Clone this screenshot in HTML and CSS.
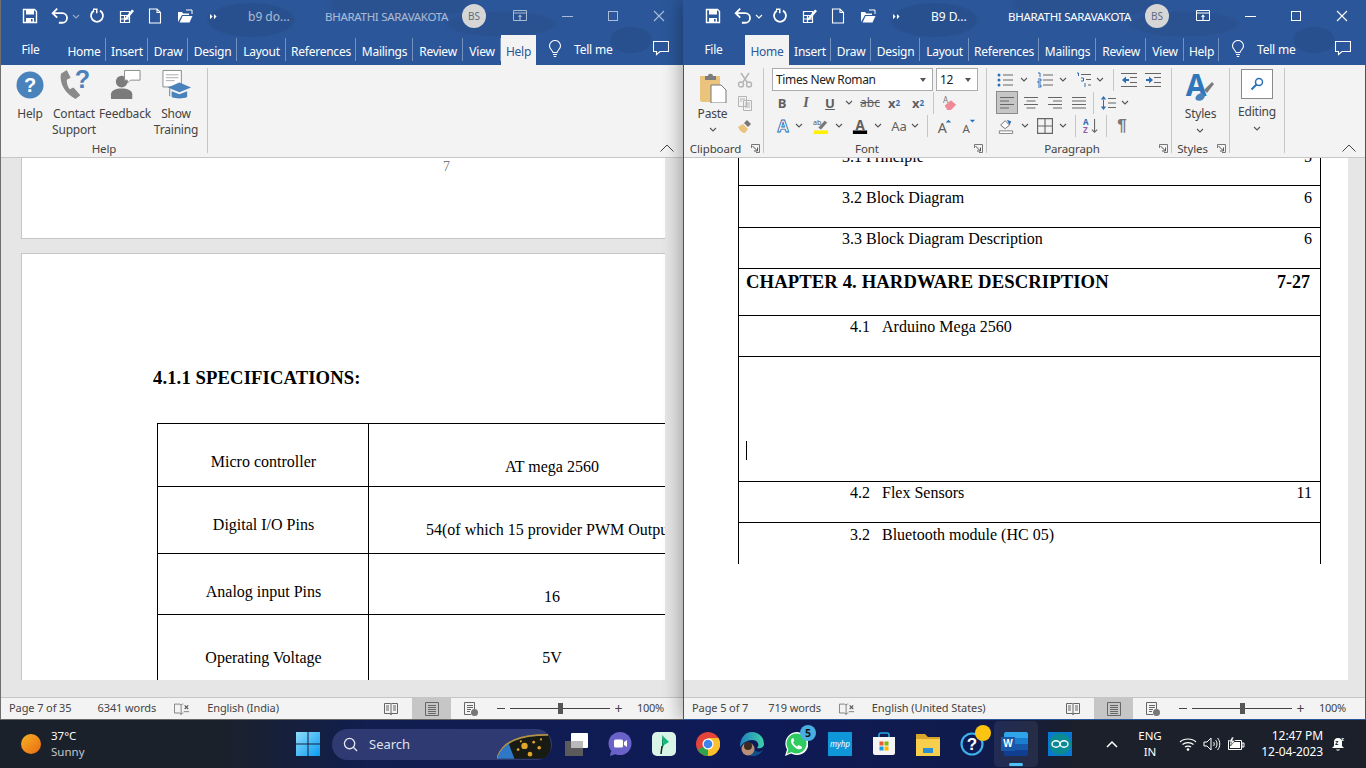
FILE: index.html
```html
<!DOCTYPE html>
<html lang="en">
<head>
  <meta charset="UTF-8">
  <title>Word windows</title>
  <link rel="stylesheet" href="styles.css">
</head>
<body>
  <svg class="sprite" aria-hidden="true">
    <symbol id="i-save" viewBox="0 0 16 16"><path d="M1.500 1.500h11l2 2v11h-13z" fill="none" stroke="currentColor" stroke-width="1.400"/><path d="M4 2h8v4.500H4zM4 10h8v4.500H4z" fill="currentColor"/><path d="M9 11h1.600v2.600H9z" fill="#2b579a"/></symbol>
    <symbol id="i-undo" viewBox="0 0 16 16"><path d="M5.500 1.500 1.500 5.500l4 4M1.500 5.500H10a4.200 4.200 0 0 1 0 8.500H7" fill="none" stroke="currentColor" stroke-width="1.600"/></symbol>
    <symbol id="i-redo" viewBox="0 0 16 16"><path d="M5 2.600A6 6 0 1 0 11 2.600" fill="none" stroke="currentColor" stroke-width="1.800"/><path d="M4 .500h4.500v4.800H7V2H4z" fill="currentColor"/></symbol>
    <symbol id="i-table" viewBox="0 0 16 16"><path d="M1.500 3.500h9v11h-9zM1.500 7.500h9M1.500 11h9M5.500 7.500v7" fill="none" stroke="currentColor" stroke-width="1.200"/><path d="m6 10 7-8.500 2 1.500-7 8.500-2.500 1z" fill="currentColor"/></symbol>
    <symbol id="i-new" viewBox="0 0 16 16"><path d="M2.500 1h7.500l3.500 3.500V15h-11zM10 1v3.500h3.500" fill="none" stroke="currentColor" stroke-width="1.100"/></symbol>
    <symbol id="i-open" viewBox="0 0 16 16"><path d="M1 14V4h4l1.200 1.500H12V7H5L1 14z" fill="currentColor"/><path d="M2.600 14.500 5.600 8H15.500l-3 6.500z" fill="currentColor"/><path d="M9 2h6v4" fill="none" stroke="currentColor"/></symbol>
    <symbol id="i-more" viewBox="0 0 10 8"><path d="M1 1v6l3-3zM5.500 1v6l3-3z" fill="currentColor"/></symbol>
    <symbol id="i-display" viewBox="0 0 14 12"><path d="M.500 .500h13v10h-13zM.500 3h13" fill="none" stroke="currentColor"/><path d="M7 4.500 4.800 6.800h1.600V10h1.200V6.800h1.600z" fill="currentColor"/></symbol>
    <symbol id="i-close" viewBox="0 0 12 12"><path d="M1 1l10 10M11 1 1 11" fill="none" stroke="currentColor" stroke-width="1.100"/></symbol>
    <symbol id="i-bulb" viewBox="0 0 14 18"><path d="M5 12.500C4.500 10 1.500 9 1.500 6a5.500 5.500 0 0 1 11 0c0 3-3 4-3.500 6.500zM5 14.500h4M5.800 16.500h2.400" fill="none" stroke="currentColor" stroke-width="1.100"/></symbol>
    <symbol id="i-comment" viewBox="0 0 16 15"><path d="M.500 .500h15v10H7l-3.500 3v-3h-3z" fill="none" stroke="currentColor" stroke-width="1.100"/></symbol>
    <symbol id="i-down" viewBox="0 0 8 5"><path d="M1 1l3 3 3-3" fill="none" stroke="currentColor" stroke-width="1.100"/></symbol>
    <symbol id="i-launch" viewBox="0 0 9 9"><path d="M.500 4V.500H8.500V8.500H5" fill="none" stroke="#777"/><path d="M1.500 2l4.500 4.500M6.500 3.500v3.500H3" fill="none" stroke="#555"/></symbol>
    <symbol id="i-up" viewBox="0 0 14 8"><path d="M.500 7.500 7 1l6.500 6.500" fill="none" stroke="currentColor"/></symbol>
    <symbol id="i-list" viewBox="0 0 16 16"><g fill="#2b6fb5"><circle cx="2" cy="3" r="1.500"/><circle cx="2" cy="8" r="1.500"/><circle cx="2" cy="13" r="1.500"/></g><path d="M6 3h10M6 8h10M6 13h10" stroke="#666"/></symbol>
    <symbol id="i-num" viewBox="0 0 16 16"><path d="M1 1h2v4M1 7h3v2H1v2h3M1 13h3v2H1" fill="none" stroke="#2b6fb5"/><path d="M6 3h10M6 8h10M6 13h10" stroke="#666"/></symbol>
    <symbol id="i-multi" viewBox="0 0 16 16"><path d="M1 1h1.500v3M5 6h2.500v3H5M9 11v4" fill="none" stroke="#2b6fb5"/><path d="M5 2.500h10M10 7.500h5M12 13h3" stroke="#666"/></symbol>
    <symbol id="i-outdent" viewBox="0 0 16 16"><path d="M1 8l4-3.500V7h3v2H5v2.500z" fill="#2b6fb5"/><path d="M0 1.500h16M9 5.500h7M9 10.500h7M0 14.500h16" stroke="#666"/></symbol>
    <symbol id="i-indent" viewBox="0 0 16 16"><path d="M8 8 4 4.500V7H1v2h3v2.500z" fill="#2b6fb5"/><path d="M0 1.500h16M9 5.500h7M9 10.500h7M0 14.500h16" stroke="#666"/></symbol>
    <symbol id="i-left" viewBox="0 0 16 14"><path d="M1 1.500h14M1 5h9M1 8.500h14M1 12h9" stroke="#666"/></symbol>
    <symbol id="i-center" viewBox="0 0 16 14"><path d="M1 1.500h14M3.500 5h9M1 8.500h14M3.500 12h9" stroke="#666"/></symbol>
    <symbol id="i-right" viewBox="0 0 16 14"><path d="M1 1.500h14M6 5h9M1 8.500h14M6 12h9" stroke="#666"/></symbol>
    <symbol id="i-justify" viewBox="0 0 16 14"><path d="M1 1.500h14M1 5h14M1 8.500h14M1 12h14" stroke="#666"/></symbol>
    <symbol id="i-spacing" viewBox="0 0 16 16"><path d="M3.500 1 .800 4.500h5.400zM3.500 15 .800 11.500h5.400zM3 4h1v8H3z" fill="#2b6fb5"/><path d="M8 3.500h8M8 8h8M8 12.500h8" stroke="#666"/></symbol>
    <symbol id="i-shade" viewBox="0 0 16 18"><path d="M2 8l5-5 5 5-5 4z" fill="#fff" stroke="#666"/><path d="M9 2l5 2-2 4z" fill="#2b6fb5"/><path d="M.500 14.500h15v3H.500z" fill="#fff" stroke="#777"/></symbol>
    <symbol id="i-border" viewBox="0 0 14 14"><path d="M.500 .500h13v13H.500zM7 .500v13M.500 7h13" fill="none" stroke="#666"/></symbol>
    <symbol id="i-glass" viewBox="0 0 14 14"><circle cx="9" cy="5" r="3.500" fill="none" stroke="#2b6fb5" stroke-width="1.500"/><path d="M6.500 7.500 1.500 12.500" stroke="#2b6fb5" stroke-width="2"/></symbol>
    <symbol id="i-read" viewBox="0 0 14 14"><path d="M.500 1.500h6l.500 .500.500-.500h6v10h-6L7 13l-.500-1.500h-6zM7 2v10M2 4h3M2 6h3M2 8h3M9 4h3M9 6h3M9 8h3" fill="none" stroke="#666"/></symbol>
    <symbol id="i-print" viewBox="0 0 14 14"><path d="M.500 .500h13v13H.500zM3 3.500h8M3 5.500h8M3 7.500h8M3 9.500h8M3 11.500h8" fill="none" stroke="#666"/></symbol>
    <symbol id="i-web" viewBox="0 0 14 14"><path d="M7 12.500H.500V.500h10V7M3 3.500h6M3 5.500h6M3 7.500h4M3 9.500h3" fill="none" stroke="#666"/><circle cx="10.500" cy="10.500" r="3.500" fill="#777"/></symbol>
    <symbol id="i-proof" viewBox="0 0 18 14"><path d="M.500 1.500h6l1.500 1 1.500-1h1M8 2.500v11M.500 1.500v10h6l1.500 1.500 1.500-1.500h1" fill="none" stroke="#777"/><path d="M12 3l4 4M16 3l-4 4" stroke="#555" stroke-width="1.200"/><path d="M11 10h6" stroke="#777"/></symbol>
  </svg>

  <div class="desktop">
    <section class="window window-back">
      <header class="head">
        <div class="titlebar">
          <div class="qat">
            <svg class="q q-save"><use href="#i-save"/></svg>
            <svg class="q q-undo"><use href="#i-undo"/></svg>
            <svg class="q-caret q-dim"><use href="#i-down"/></svg>
            <svg class="q q-redo"><use href="#i-redo"/></svg>
            <svg class="q q-table"><use href="#i-table"/></svg>
            <svg class="q q-new"><use href="#i-new"/></svg>
            <svg class="q q-open"><use href="#i-open"/></svg>
            <svg class="q-more"><use href="#i-more"/></svg>
          </div>
          <div class="doc-title">b9 do...</div>
          <div class="user-name">BHARATHI SARAVAKOTA</div>
          <div class="avatar">BS</div>
          <svg class="display-btn"><use href="#i-display"/></svg>
          <div class="caption"><span class="cap-min"></span></div>
          <div class="caption"><span class="cap-max"></span></div>
          <div class="caption"><svg class="cap-close"><use href="#i-close"/></svg></div>
        </div>
        <nav class="tabbar">
          <div class="tabs">
            <div class="tab tab-file">File</div>
            <div class="tab">Home</div>
            <div class="tab">Insert</div>
            <div class="tab">Draw</div>
            <div class="tab">Design</div>
            <div class="tab">Layout</div>
            <div class="tab">References</div>
            <div class="tab">Mailings</div>
            <div class="tab">Review</div>
            <div class="tab">View</div>
            <div class="tab active">Help</div>
          </div>
          <svg class="bulb"><use href="#i-bulb"/></svg>
          <div class="tell">Tell me</div>
          <svg class="comment"><use href="#i-comment"/></svg>
        </nav>
      </header>

      <div class="ribbon">
        <div class="group group-help">
          <div class="group-body help-items">
            <div class="big big-help">
              <svg viewBox="0 0 28 28" class="big-icon"><circle cx="14" cy="14" r="13.500" fill="#4a82bb"/><text x="14" y="21" class="q-mark">?</text></svg>
              <span>Help</span>
            </div>
            <div class="big big-contact">
              <svg viewBox="0 0 32 32" class="big-icon"><path d="M8 1 2 5c-2 10 5 21 15 26l5-4-7-8-4 2c-2-3-3-6-3-10l4-2z" fill="#8a8a8a"/><text x="24" y="20" class="q-blue">?</text></svg>
              <span>Contact<br>Support</span>
            </div>
            <div class="big big-feedback">
              <svg viewBox="0 0 32 32" class="big-icon"><circle cx="12" cy="13" r="6" fill="#7b7b7b"/><path d="M1 31v-5c0-4 5-6 11-6s11 2 11 6v5z" fill="#7b7b7b"/><path d="M15 1.500h16v10H21l-3 3v-3h-3z" fill="#fff" stroke="#8a8a8a"/></svg>
              <span>Feedback</span>
            </div>
            <div class="big big-train">
              <svg viewBox="0 0 32 32" class="big-icon"><path d="M2 1.500h19v17H2z" fill="#fff" stroke="#8a8a8a"/><path d="M5 6h13M5 9h13M5 12h9" stroke="#aaa"/><path d="M7 19 19 14l12 5-12 5z" fill="#4a82bb"/><path d="M11 23v6c4 2 12 2 16 0v-6l-8 3z" fill="#4a82bb"/><path d="M9 20v8" stroke="#4a82bb"/></svg>
              <span>Show<br>Training</span>
            </div>
          </div>
          <div class="group-label"><span>Help</span></div>
        </div>
        <svg class="collapse"><use href="#i-up"/></svg>
      </div>

      <div class="doc doc-back">
        <div class="view">
          <div class="page page-short"><div class="page-number">7</div></div>
          <div class="page page-specs">
            <h2 class="spec-title">4.1.1 SPECIFICATIONS:</h2>
            <table class="spec-table">
              <tr class="s63"><td class="pa">Micro controller</td><td class="pb">AT mega 2560</td></tr>
              <tr class="s67"><td class="pa">Digital I/O Pins</td><td class="pb">54(of which 15 provider PWM Output)</td></tr>
              <tr class="s61"><td class="pa">Analog input Pins</td><td class="pb">16</td></tr>
              <tr class="s67"><td class="pb">Operating Voltage</td><td class="pb">5V</td></tr>
            </table>
          </div>
        </div>
      </div>

      <footer class="status">
        <span class="st st-page">Page 7 of 35</span>
        <span class="st st-words">6341 words</span>
        <svg class="st-proof"><use href="#i-proof"/></svg>
        <span class="st">English (India)</span>
        <div class="views">
          <div class="view-btn"><svg><use href="#i-read"/></svg></div>
          <div class="view-btn on"><svg><use href="#i-print"/></svg></div>
          <div class="view-btn"><svg><use href="#i-web"/></svg></div>
          <div class="zoom-minus"></div>
          <div class="slider"><span></span></div>
          <div class="zoom-plus">+</div>
          <div class="zoom-val">100%</div>
        </div>
      </footer>
    </section>

    <section class="window window-front">
      <header class="head">
        <div class="titlebar">
          <div class="qat">
            <svg class="q q-save"><use href="#i-save"/></svg>
            <svg class="q q-undo"><use href="#i-undo"/></svg>
            <svg class="q-caret"><use href="#i-down"/></svg>
            <svg class="q q-redo"><use href="#i-redo"/></svg>
            <svg class="q q-table"><use href="#i-table"/></svg>
            <svg class="q q-new"><use href="#i-new"/></svg>
            <svg class="q q-open"><use href="#i-open"/></svg>
            <svg class="q-more"><use href="#i-more"/></svg>
          </div>
          <div class="doc-title">B9 D...</div>
          <div class="user-name">BHARATHI SARAVAKOTA</div>
          <div class="avatar">BS</div>
          <svg class="display-btn"><use href="#i-display"/></svg>
          <div class="caption"><span class="cap-min"></span></div>
          <div class="caption"><span class="cap-max"></span></div>
          <div class="caption"><svg class="cap-close"><use href="#i-close"/></svg></div>
        </div>
        <nav class="tabbar">
          <div class="tabs">
            <div class="tab tab-file">File</div>
            <div class="tab active">Home</div>
            <div class="tab">Insert</div>
            <div class="tab">Draw</div>
            <div class="tab">Design</div>
            <div class="tab">Layout</div>
            <div class="tab">References</div>
            <div class="tab">Mailings</div>
            <div class="tab">Review</div>
            <div class="tab">View</div>
            <div class="tab">Help</div>
          </div>
          <svg class="bulb"><use href="#i-bulb"/></svg>
          <div class="tell">Tell me</div>
          <svg class="comment"><use href="#i-comment"/></svg>
        </nav>
      </header>

      <div class="ribbon">
        <div class="group group-clip">
          <div class="group-body clip-body">
            <div class="big big-paste">
              <svg viewBox="0 0 28 30" class="paste-icon"><path d="M1 3h20v26H3a2 2 0 0 1-2-2z" fill="#eac47c"/><path d="M6 3h3c0-3 5-3 5 0h3v4H6z" fill="#7d7d7d"/><path d="M12 12h10l5 5v13H12z" fill="#fff" stroke="#777"/></svg>
              <span>Paste</span>
              <svg class="down"><use href="#i-down"/></svg>
            </div>
            <div class="clip-tools">
              <div class="t"><svg viewBox="0 0 16 16"><path d="M4 1l6 9M12 1l-6 9" stroke="#b4b4b4" stroke-width="1.500"/><circle cx="4" cy="12.500" r="2.500" fill="none" stroke="#b4b4b4" stroke-width="1.400"/><circle cx="12" cy="12.500" r="2.500" fill="none" stroke="#b4b4b4" stroke-width="1.400"/></svg></div>
              <div class="t"><svg viewBox="0 0 16 16"><path d="M1.500 1.500h8v10h-8zM6.500 5.500h8v10h-8zM3 4h5M3 6h2M8 8h5M8 10h5M8 12h5" fill="#f3f3f3" stroke="#b4b4b4"/></svg></div>
              <div class="t"><svg viewBox="0 0 16 16"><path d="M1 9l5-3 5 5-3 4c-3 0-5-2-7-6z" fill="#eac47c"/><path d="M7 5l3-3 4 4-3 3z" fill="#777"/></svg></div>
            </div>
          </div>
          <div class="group-label"><span>Clipboard</span><svg class="launch"><use href="#i-launch"/></svg></div>
        </div>

        <div class="group group-font">
          <div class="group-body">
            <div class="row row-select">
              <div class="select select-font"><span>Times New Roman</span><i></i></div>
              <div class="select select-size"><span>12</span><i></i></div>
            </div>
            <div class="row">
              <div class="t w24 fx fx-b">B</div>
              <div class="t w24 fx fx-i">I</div>
              <div class="t w24 fx fx-u">U</div>
              <div class="t w14"><svg class="down"><use href="#i-down"/></svg></div>
              <div class="t w24 ml2 fx fx-s">abc</div>
              <div class="t w24 fx fx-b">x<sub>2</sub></div>
              <div class="t w24 fx fx-b">x<sup>2</sup></div>
              <div class="sep ml3"></div>
              <div class="t w24 ml4"><svg viewBox="0 0 18 18"><text x="1" y="9" class="small-a">A</text><path d="M3 12l7-6 6 5-6 6H6z" fill="#ee8a98"/></svg></div>
            </div>
            <div class="row">
              <div class="t w22 ml2"><svg viewBox="0 0 18 18"><text x="9" y="16" class="fx-glow">A</text></svg></div>
              <div class="t w10"><svg class="down"><use href="#i-down"/></svg></div>
              <div class="t w24 ml5"><svg viewBox="0 0 18 18"><text x="0" y="8" class="small-ab">ab</text><path d="M6 11l7-8 3 2-7 8z" fill="#777"/><path d="M1 14h16v4H1z" fill="#ffef00"/></svg></div>
              <div class="t w12"><svg class="down"><use href="#i-down"/></svg></div>
              <div class="t w24 ml3"><svg viewBox="0 0 18 18"><text x="9" y="13" class="color-a">A</text><path d="M1 14h16v4H1z" fill="#000"/></svg></div>
              <div class="t w12"><svg class="down"><use href="#i-down"/></svg></div>
              <div class="t w24 ml3 fx fx-aa">Aa</div>
              <div class="t w8"><svg class="down"><use href="#i-down"/></svg></div>
              <div class="sep ml8"></div>
              <div class="t w24 ml4"><svg viewBox="0 0 18 18"><text x="7" y="17" class="grow-a">A</text><path d="M11 5l3-3 3 3z" fill="#2b6fb5"/></svg></div>
              <div class="t w24"><svg viewBox="0 0 18 18"><text x="7" y="17" class="shrink-a">A</text><path d="M11 2l3 3 3-3z" fill="#2b6fb5"/></svg></div>
            </div>
          </div>
          <div class="group-label"><span>Font</span><svg class="launch"><use href="#i-launch"/></svg></div>
        </div>

        <div class="group group-para">
          <div class="group-body">
            <div class="row">
              <div class="t w24"><svg><use href="#i-list"/></svg></div>
              <div class="t w14"><svg class="down"><use href="#i-down"/></svg></div>
              <div class="t w24 ml2"><svg><use href="#i-num"/></svg></div>
              <div class="t w12"><svg class="down"><use href="#i-down"/></svg></div>
              <div class="t w22 ml4"><svg><use href="#i-multi"/></svg></div>
              <div class="t w10"><svg class="down"><use href="#i-down"/></svg></div>
              <div class="sep ml8"></div>
              <div class="t w24 ml3"><svg><use href="#i-outdent"/></svg></div>
              <div class="t w24"><svg><use href="#i-indent"/></svg></div>
            </div>
            <div class="row">
              <div class="t w22 ml3 pressed"><svg><use href="#i-left"/></svg></div>
              <div class="t w24 ml1"><svg><use href="#i-center"/></svg></div>
              <div class="t w24"><svg><use href="#i-right"/></svg></div>
              <div class="t w24"><svg><use href="#i-justify"/></svg></div>
              <div class="sep ml2"></div>
              <div class="t w24 ml2"><svg><use href="#i-spacing"/></svg></div>
              <div class="t w10"><svg class="down"><use href="#i-down"/></svg></div>
            </div>
            <div class="row">
              <div class="t w24 ml1"><svg><use href="#i-shade"/></svg></div>
              <div class="t w14"><svg class="down"><use href="#i-down"/></svg></div>
              <div class="t w24 ml1"><svg><use href="#i-border"/></svg></div>
              <div class="t w12"><svg class="down"><use href="#i-down"/></svg></div>
              <div class="sep ml6"></div>
              <div class="t w24 ml3"><svg viewBox="0 0 18 18"><text x="0" y="8" class="sort-a">A</text><text x="0" y="17" class="sort-z">Z</text><path d="M13 1v15M10 13l3 3 3-3" fill="none" stroke="#666" stroke-width="1.200"/></svg></div>
              <div class="sep ml3"></div>
              <div class="t w24 ml3 fx pilcrow">&para;</div>
            </div>
          </div>
          <div class="group-label"><span>Paragraph</span><svg class="launch"><use href="#i-launch"/></svg></div>
        </div>

        <div class="group group-styles">
          <div class="group-body center-body">
            <div class="big big-styles">
              <svg viewBox="0 0 30 32" class="styles-icon"><text x="11" y="25" class="styles-a">A</text><path d="M11 29c-2-3 2-7 6-7l3 3c-1 4-5 6-9 4z" fill="#4a82bb"/><path d="M19 19l8-8 2 2-7 9z" fill="#7b7b7b"/></svg>
              <span>Styles</span>
              <svg class="down"><use href="#i-down"/></svg>
            </div>
          </div>
          <div class="group-label"><span>Styles</span><svg class="launch"><use href="#i-launch"/></svg></div>
        </div>

        <div class="group group-edit">
          <div class="group-body center-body">
            <div class="big big-edit">
              <div class="edit-box"><svg><use href="#i-glass"/></svg></div>
              <span>Editing</span>
              <svg class="down"><use href="#i-down"/></svg>
            </div>
          </div>
        </div>
        <svg class="collapse"><use href="#i-up"/></svg>
      </div>

      <div class="doc doc-front">
        <div class="view">
          <div class="page page-toc">
            <table class="toc">
              <tr class="r41"><td class="lv3">3.1 Principle</td><td class="pg">5</td></tr>
              <tr class="r42"><td class="lv3">3.2 Block Diagram</td><td class="pg">6</td></tr>
              <tr class="r41 tight"><td class="lv3">3.3 Block Diagram Description</td><td class="pg">6</td></tr>
              <tr class="r47 tight"><td class="chapter">CHAPTER 4. HARDWARE DESCRIPTION</td><td class="pg chapter-pg">7-27</td></tr>
              <tr class="r41 tight"><td class="lv4"><b>4.1</b>Arduino Mega 2560</td><td class="pg"></td></tr>
              <tr class="r125"><td class="blank"><span class="cursor"></span></td><td class="pg"></td></tr>
              <tr class="r41 tight"><td class="lv4"><b>4.2</b>Flex Sensors</td><td class="pg">11</td></tr>
              <tr class="r41 last"><td class="lv4"><b>3.2</b>Bluetooth module (HC 05)</td><td class="pg"></td></tr>
            </table>
          </div>
        </div>
      </div>

      <footer class="status">
        <span class="st st-page">Page 5 of 7</span>
        <span class="st st-words-b">719 words</span>
        <svg class="st-proof"><use href="#i-proof"/></svg>
        <span class="st">English (United States)</span>
        <div class="views">
          <div class="view-btn"><svg><use href="#i-read"/></svg></div>
          <div class="view-btn on"><svg><use href="#i-print"/></svg></div>
          <div class="view-btn"><svg><use href="#i-web"/></svg></div>
          <div class="zoom-minus"></div>
          <div class="slider"><span></span></div>
          <div class="zoom-plus">+</div>
          <div class="zoom-val">100%</div>
        </div>
      </footer>
    </section>
  </div>

  <footer class="taskbar">
    <div class="weather">
      <div class="sun"></div>
      <div class="weather-text"><div>37°C</div><div class="dim">Sunny</div></div>
    </div>
    <div class="task">
      <svg viewBox="0 0 24 24"><defs><linearGradient id="win" x1="0" y1="0" x2="1" y2="1"><stop offset="0" stop-color="#8fdcfb"/><stop offset="1" stop-color="#0a9bf0"/></linearGradient></defs><path d="M0 0h11.500v11.500H0zM12.500 0H24v11.500H12.500zM0 12.500h11.500V24H0zM12.500 12.500H24V24H12.500z" fill="url(#win)"/></svg>
    </div>
    <div class="search">
      <svg viewBox="0 0 16 16" class="search-icon"><circle cx="7" cy="7" r="5.500" fill="none" stroke="#e6e8ef" stroke-width="1.400"/><path d="M11 11l4 4" stroke="#e6e8ef" stroke-width="1.400"/></svg>
      <span>Search</span>
      <svg viewBox="0 0 60 31" class="search-art"><path d="M0 31C6 12 24 5 56 5c4 8 4 18-2 26z" fill="#181a14"/><path d="M0 31C6 12 24 5 56 5" fill="none" stroke="#b09248" stroke-width="2"/><path d="M0 31c3-8 7-13 13-16l6 16z" fill="#2f78c8"/><g fill="#dfa52c"><circle cx="30" cy="17" r="3.500"/><circle cx="23" cy="21" r="1.500"/><circle cx="40" cy="13" r="1.500"/><circle cx="46" cy="19" r="2"/><circle cx="36" cy="26" r="2.500"/><circle cx="26" cy="12" r="1.200"/><circle cx="48" cy="10" r="1.200"/></g></svg>
    </div>
    <div class="task">
      <svg viewBox="0 0 24 24"><rect x="1" y="9" width="18" height="15" fill="#5b5b5b"/><rect x="7" y="1" width="17" height="15" rx="1" fill="#fff"/><rect x="7" y="9" width="12" height="7" fill="#b9b9b9"/></svg>
    </div>
    <div class="task">
      <svg viewBox="0 0 24 24"><circle cx="12" cy="11.500" r="11.500" fill="#6a62c9"/><path d="M3 19l-1 5 6-2z" fill="#6a62c9"/><rect x="6" y="7.500" width="9" height="8" rx="1.500" fill="#fff"/><path d="M16 10l3-2v7l-3-2z" fill="#fff"/></svg>
    </div>
    <div class="task">
      <svg viewBox="0 0 24 24"><rect width="24" height="24" rx="5" fill="#d8f5e8"/><path d="M10 3l7 7-5 3z" fill="#14b77e"/><path d="M10 3v14l2-4z" fill="#0b8e61"/><path d="M10 14l-1 8" stroke="#222" stroke-width="1.500"/></svg>
    </div>
    <div class="task">
      <svg viewBox="0 0 24 24"><circle cx="12" cy="12" r="12" fill="#e5443a"/><path d="M12 12 1.600 18A12 12 0 0 0 17 23z" fill="#2ea44f"/><path d="M12 6h10.500A12 12 0 0 1 12 24z" fill="#fbc02d"/><circle cx="12" cy="12" r="5.500" fill="#fff"/><circle cx="12" cy="12" r="4.300" fill="#3f83ec"/></svg>
    </div>
    <div class="task">
      <svg viewBox="0 0 24 24"><defs><linearGradient id="edge" x1="0" y1="0" x2="1" y2="0"><stop offset="0" stop-color="#1f7fbf"/><stop offset="1" stop-color="#3fd0a8"/></linearGradient></defs><path d="M12 0a12 12 0 0 1 12 12c0 3-3 5-7 4 3-3 1-8-5-8-5 0-9 3-12 7C0 6 5 0 12 0z" fill="url(#edge)"/><path d="M10 24c5 1 10-1 13-6-4 3-8 2-9-1z" fill="#114f87"/><circle cx="8" cy="17" r="6.500" fill="#b98f78"/><circle cx="8" cy="14" r="4" fill="#3b2a24"/></svg>
    </div>
    <div class="task task-wa">
      <svg viewBox="0 0 24 24"><path d="M1 24l2-6.500A11.500 11.500 0 1 1 7 21.500z" fill="#fff"/><path d="M3 22l1.400-4.700A10 10 0 1 1 7.300 20z" fill="#2ecc60"/><path d="M8 6.500c-2 2-1 5 2 8s6 3.500 8 2l-.5-2-3-1.500-1 1.500c-2-.5-3.500-2-4.500-4.500l1.300-1-1-3z" fill="#fff"/></svg>
      <span class="badge">5</span>
    </div>
    <div class="task">
      <svg viewBox="0 0 24 24"><rect width="24" height="24" fill="#0e96d8"/><text x="12" y="15" class="hp-text">myhp</text></svg>
    </div>
    <div class="task">
      <svg viewBox="0 0 24 24"><path d="M7 6V3a2 2 0 0 1 2-2h6a2 2 0 0 1 2 2v3" fill="none" stroke="#29a3e3" stroke-width="1.600"/><path d="M1 5h22v16a2 2 0 0 1-2 2H3a2 2 0 0 1-2-2z" fill="#f4f4f4"/><path d="M7.500 9.500h4v4h-4z" fill="#ec5a35"/><path d="M12.500 9.500h4v4h-4z" fill="#7fb900"/><path d="M7.500 14.500h4v4h-4z" fill="#1c9ce0"/><path d="M12.500 14.500h4v4h-4z" fill="#fcb900"/></svg>
    </div>
    <div class="task">
      <svg viewBox="0 0 24 24"><path d="M0 2h9l3 3h12v18H0z" fill="#d8a62a"/><path d="M0 7h24v17H0z" fill="#f8cf4c"/><path d="M7 16h10v5H7z" fill="#2a8fd5"/></svg>
    </div>
    <div class="task task-help">
      <svg viewBox="0 0 24 24"><circle cx="12" cy="12" r="10.500" fill="#0e1a56" stroke="#3cb1ea" stroke-width="2.200"/><text x="12" y="18" class="help-mark">?</text></svg>
      <span class="dot"></span>
    </div>
    <div class="task task-word">
      <div class="word-icon"><b>W</b></div>
      <span class="running"></span>
    </div>
    <div class="task">
      <svg viewBox="0 0 24 24"><rect width="24" height="24" fill="#0978d2"/><circle cx="12" cy="12" r="11" fill="#0a8a94"/><ellipse cx="8" cy="12" rx="4" ry="3.200" fill="none" stroke="#fff" stroke-width="1.400"/><ellipse cx="16" cy="12" rx="4" ry="3.200" fill="none" stroke="#fff" stroke-width="1.400"/></svg>
    </div>

    <svg class="tray-up" viewBox="0 0 12 8"><path d="M1 7l5-5 5 5" fill="none" stroke="#fff" stroke-width="1.500"/></svg>
    <div class="lang"><div>ENG</div><div>IN</div></div>
    <svg class="tray-icon wifi" viewBox="0 0 18 14"><path d="M1 5c4-4 12-4 16 0M3.500 7.500c3-2.500 8-2.500 11 0M6 10c1.500-1.200 4.500-1.200 6 0" fill="none" stroke="#fff" stroke-width="1.200"/><circle cx="9" cy="12.500" r="1.300" fill="#fff"/></svg>
    <svg class="tray-icon" viewBox="0 0 18 14"><path d="M1 5h3l4-4v12l-4-4H1z" fill="none" stroke="#fff"/><path d="M10.500 5c1 1 1 3 0 4M12.500 3c2 2 2 6 0 8M14.500 1c3 3 3 9 0 12" fill="none" stroke="#fff"/></svg>
    <svg class="tray-icon" viewBox="0 0 18 14"><path d="M1.500 3.500h13v9h-13zM15 6h2v4h-2z" fill="#1c212a" stroke="#fff"/><path d="M3 5h10v6H3z" fill="#fff"/><path d="M5 0 2 5h2.500L3.500 9 8 3.500H5.500L7 0z" fill="#fff" stroke="#1c212a" stroke-width=".6"/></svg>
    <div class="clock"><div>12:47 PM</div><div>12-04-2023</div></div>
    <svg class="bell" viewBox="0 0 16 16"><path d="M8 2c-3 0-4 2-4 4v4l-2 2h12l-2-2V6c0-2-1-4-4-4zM6 13.500c.5 1.500 3.500 1.500 4 0z" fill="#fff"/><text x="5" y="9" class="bell-z">z</text><text x="11" y="5" class="bell-z2">z</text></svg>
  </footer>
</body>
</html>
```

FILE: styles.css
```css
* {
  box-sizing: border-box;
}

html, body {
  margin: 0;
  height: 100%;
  overflow: hidden;
}

body {
  width: 1366px;
  height: 768px;
  display: flex;
  flex-direction: column;
  font-family: "Noto Sans", "Open Sans", sans-serif;
  font-size: 12px;
  color: #444;
  background: #1c212a;
}

.sprite {
  position: absolute;
  width: 0;
  height: 0;
}

svg {
  display: block;
}

.desktop {
  display: flex;
  height: 720px;
}

/* windows */

.window {
  display: flex;
  flex-direction: column;
  height: 720px;
  background: #f3f3f3;
}

.window-back {
  width: 683px;
  border-left: 1px solid #6f6f6f;
  border-top: 1px solid #777;
  border-bottom: 1px solid #666;
}

.window-front {
  position: relative;
  width: 683px;
  border-left: 1px solid #2b579a;
  border-right: 1px solid #2b579a;
  border-bottom: 1px solid #2b579a;
  box-shadow: -4px 0 16px rgba(0, 0, 0, 0.28);
}

.head {
  height: 65px;
  flex-shrink: 0;
  color: #fff;
  background:
    radial-gradient(ellipse 46px 18px at 250px 20px, #28508e 90%, transparent 100%),
    radial-gradient(ellipse 80px 16px at 400px 4px, #2a5190 80%, transparent 100%),
    radial-gradient(ellipse 22px 14px at 630px 40px, #28508e 90%, transparent 100%),
    radial-gradient(ellipse 60px 14px at 500px 24px, #2a5190 80%, transparent 100%),
    #2b579a;
}

.window-back .head {
  margin-top: -1px;
}

.titlebar {
  height: 32px;
  display: flex;
  align-items: center;
}

.qat {
  display: flex;
  align-items: center;
  margin-left: 21px;
}

.q {
  width: 16px;
  height: 16px;
}

.q-save { margin-right: 13px; }
.q-undo { width: 18px; height: 18px; margin-right: 3px; }
.q-caret { width: 8px; height: 5px; margin-right: 9px; }
.q-dim { opacity: 0.5; }
.q-redo { margin-right: 14px; }
.q-table { margin-right: 12px; }
.q-new { margin-right: 14px; }
.q-open { margin-right: 16px; }
.q-more { width: 9px; height: 7px; }

.doc-title {
  width: 77px;
  margin-left: 30px;
  color: #fff;
  white-space: nowrap;
}

.user-name {
  width: 137px;
  font-size: 11.5px;
  letter-spacing: -0.3px;
  white-space: nowrap;
}

.avatar {
  width: 24px;
  height: 24px;
  border-radius: 50%;
  background: #d6d6d6;
  color: #5f6c80;
  font-size: 10px;
  line-height: 24px;
  text-align: center;
}

.display-btn {
  width: 14px;
  height: 12px;
  margin: 0 17px 0 27px;
}

.caption {
  width: 46px;
  height: 32px;
  display: flex;
  align-items: center;
  justify-content: center;
}

.cap-min {
  width: 11px;
  height: 1px;
  background: #fff;
}

.cap-max {
  width: 10px;
  height: 10px;
  border: 1px solid #fff;
}

.cap-close {
  width: 12px;
  height: 12px;
}

.window-back .doc-title,
.window-back .user-name,
.window-back .display-btn,
.window-back .caption {
  opacity: 0.6;
}

.tabbar {
  height: 33px;
  display: flex;
  align-items: flex-end;
}

.tabs {
  display: grid;
  grid-template-columns: 61px 44px 42px 40px 49px 49px 70px 57px 50px 38px 35px;
  height: 33px;
}

.tab {
  display: flex;
  justify-content: center;
  padding-top: 11px;
  font-size: 12px;
  letter-spacing: -0.25px;
  white-space: nowrap;
  background: linear-gradient(rgba(255, 255, 255, 0.35), rgba(255, 255, 255, 0.35)) right 6px / 1px 23px no-repeat;
}

.tab-file {
  padding-top: 9px;
  padding-right: 2px;
  background: none;
}

.tab.active {
  margin-top: 3px;
  padding-top: 8px;
  color: #2b579a;
  background: #f3f3f3;
}

.bulb {
  width: 14px;
  height: 18px;
  margin: 0 12px 7px 12px;
}

.tell {
  margin-bottom: 7px;
  letter-spacing: -0.2px;
}

.comment {
  width: 16px;
  height: 15px;
  margin: 0 14px 9px auto;
}

/* ribbon */

.ribbon {
  height: 93px;
  flex-shrink: 0;
  display: flex;
  padding-top: 3px;
  background: #f3f3f3;
  border-bottom: 1px solid #c6c6c6;
}

.group {
  display: flex;
  flex-direction: column;
  height: 85px;
  border-right: 1px solid #c6c6c6;
}

.group-body {
  height: 73px;
}

.group-label {
  display: flex;
  align-items: center;
  height: 14px;
  margin-bottom: -3px;
  font-size: 11.5px;
  letter-spacing: -0.1px;
}

.group-label span {
  flex: 1;
  text-align: center;
}

.launch {
  width: 9px;
  height: 9px;
  margin: 0 3px 0 4px;
}

.group-help { width: 207px; }
.group-clip { width: 80px; }
.group-font { width: 223px; padding-left: 6px; }
.group-para { width: 185px; padding-left: 6px; }
.group-styles { width: 58px; }
.group-edit { width: 55px; }

.group-font .launch { margin-left: 10px; }
.group-para .launch { margin-left: 8px; }

.collapse {
  width: 14px;
  height: 8px;
  margin: 76px 9px 0 auto;
  color: #444;
}

.big {
  display: flex;
  flex-direction: column;
  align-items: center;
  line-height: 16px;
  text-align: center;
  white-space: nowrap;
  letter-spacing: -0.2px;
}

.help-items {
  display: flex;
  padding: 1px 0 0 9px;
}

.big-help { width: 40px; }
.big-contact { width: 48px; }
.big-feedback { width: 54px; }
.big-train { width: 48px; }

.big-icon {
  width: 31px;
  height: 31px;
  margin-bottom: 6px;
}

.big-help .big-icon {
  width: 28px;
  height: 28px;
  margin: 2px 0 7px;
}

.q-mark {
  font: bold 20px "Liberation Sans", sans-serif;
  fill: #fff;
  text-anchor: middle;
}

.q-blue {
  font: bold 26px "Liberation Sans", sans-serif;
  fill: #4a82bb;
  text-anchor: middle;
}

.clip-body {
  display: flex;
  padding-left: 7px;
}

.big-paste {
  width: 43px;
  padding-top: 5px;
}

.paste-icon {
  width: 28px;
  height: 30px;
  margin-bottom: 3px;
}

.down {
  width: 8px;
  height: 5px;
  color: #555;
}

.big-paste .down {
  margin-top: 5px;
}

.big-styles .down,
.big-edit .down {
  margin-top: 6px;
}

.clip-tools {
  width: 22px;
}

.t {
  width: 24px;
  height: 23px;
  flex-shrink: 0;
  display: flex;
  align-items: center;
  justify-content: center;
}

.t svg {
  width: 16px;
  height: 16px;
}

.t .down {
  width: 8px;
  height: 5px;
}

.clip-tools .t {
  width: 22px;
}

.row {
  display: flex;
  align-items: center;
  height: 23px;
}

.row-select {
  padding-left: 2px;
  gap: 3px;
}

.select {
  display: flex;
  align-items: center;
  height: 23px;
  padding: 0 4px 0 3px;
  background: #fff;
  border: 1px solid #ababab;
  color: #222;
  font-size: 12px;
  letter-spacing: -0.35px;
}

.select span {
  flex: 1;
}

.select i {
  width: 0;
  height: 0;
  margin-right: 2px;
  border-left: 3.5px solid transparent;
  border-right: 3.5px solid transparent;
  border-top: 4px solid #555;
}

.select-font { width: 161px; }
.select-size { width: 42px; }

.w8 { width: 8px; }
.w10 { width: 10px; }
.w12 { width: 12px; }
.w14 { width: 14px; }
.w22 { width: 22px; }
.w24 { width: 24px; }

.ml1 { margin-left: 1px; }
.ml2 { margin-left: 2px; }
.ml3 { margin-left: 3px; }
.ml4 { margin-left: 4px; }
.ml5 { margin-left: 5px; }
.ml6 { margin-left: 6px; }
.ml8 { margin-left: 8px; }

.sep {
  width: 1px;
  height: 22px;
  flex-shrink: 0;
  background: #c6c6c6;
}

.pressed {
  background: #c6c6c6;
  border: 1px solid #8a8a8a;
}

.fx {
  color: #5f5f5f;
}

.fx-b {
  font: bold 13px "Open Sans", sans-serif;
}

.fx-b sub,
.fx-b sup {
  font-size: 8px;
  line-height: 0;
  color: #2b6fb5;
}

.fx-i {
  font: italic bold 14px "Liberation Serif", serif;
}

.fx-u {
  font: bold 13px "Open Sans", sans-serif;
  text-decoration: underline;
}

.fx-s {
  font-size: 12px;
  text-decoration: line-through;
}

.fx-aa {
  font-size: 13px;
}

.pilcrow {
  font: bold 17px "Liberation Sans", sans-serif;
  color: #777;
}

.small-a {
  font: 9px "Noto Sans", sans-serif;
  fill: #777;
}

.small-ab {
  font: 8px "Noto Sans", sans-serif;
  fill: #555;
}

.fx-glow {
  font: bold 18px "Noto Sans", sans-serif;
  fill: #fff;
  stroke: #2b6fb5;
  stroke-width: 1;
  text-anchor: middle;
}

.color-a {
  font: bold 15px "Noto Sans", sans-serif;
  fill: #5f5f5f;
  text-anchor: middle;
}

.grow-a {
  font: 16px "Noto Sans", sans-serif;
  fill: #5f5f5f;
  text-anchor: middle;
}

.shrink-a {
  font: 13px "Noto Sans", sans-serif;
  fill: #5f5f5f;
  text-anchor: middle;
}

.sort-a {
  font: bold 9px "Noto Sans", sans-serif;
  fill: #2b6fb5;
}

.sort-z {
  font: bold 9px "Noto Sans", sans-serif;
  fill: #8e5bb5;
}

.center-body {
  display: flex;
  justify-content: center;
}

.big-styles {
  padding-top: 3px;
}

.styles-icon {
  width: 30px;
  height: 32px;
  margin-bottom: 3px;
}

.styles-a {
  font: bold 30px "Noto Sans", sans-serif;
  fill: #2f77bc;
  text-anchor: middle;
}

.big-edit {
  padding-top: 1px;
}

.edit-box {
  width: 32px;
  height: 30px;
  display: flex;
  align-items: center;
  justify-content: center;
  margin-bottom: 5px;
  background: #fff;
  border: 1px solid #8a8a8a;
}

.edit-box svg {
  width: 14px;
  height: 14px;
}

/* documents */

.doc {
  flex: 1;
  min-height: 0;
  padding: 0 17px 17px 20px;
  background: #e6e6e6;
}

.doc-back {
  padding-right: 18px;
}

.doc-front {
  padding-left: 0;
}

.view {
  height: 100%;
  overflow: hidden;
  font-family: "Liberation Serif", serif;
  font-size: 16px;
  line-height: 18px;
  color: #000;
}

.page {
  width: 900px;
  background: #fff;
  border-left: 1px solid #c6c6c6;
}

.page-short {
  height: 81px;
  margin-bottom: 14px;
  padding-top: 2px;
  border-bottom: 1px solid #c6c6c6;
}

.page-number {
  padding-left: 421px;
  font-size: 14px;
  line-height: 14px;
  color: #7a7a7a;
}

.page-specs {
  height: 600px;
  padding: 113px 0 0 131px;
  border-top: 1px solid #c6c6c6;
}

.spec-title {
  margin: 0;
  font-size: 18.67px;
  letter-spacing: 0.1px;
  line-height: 22px;
}

.spec-table {
  margin: 34px 0 0 4px;
  width: 578px;
  border-collapse: separate;
  border-spacing: 0;
  table-layout: fixed;
  border-top: 1px solid #000;
  border-left: 1px solid #000;
  text-align: center;
}

.spec-table td {
  vertical-align: top;
  border-bottom: 1px solid #000;
}

.spec-table td:first-child {
  width: 211px;
  padding-left: 2px;
  border-right: 1px solid #000;
}

.s61 td { height: 61px; }
.s63 td { height: 63px; }
.s67 td { height: 67px; }

.pa { padding-top: 29px; }
.pb { padding-top: 34px; }

.page-toc {
  width: 664px;
  height: 700px;
  padding-left: 55px;
  border-left: 0;
}

.toc {
  width: 583px;
  margin: -13px 0 0 -1px;
  border-collapse: separate;
  border-spacing: 0;
  table-layout: fixed;
  border-left: 1px solid #000;
  border-right: 1px solid #000;
}

.toc td {
  vertical-align: top;
  padding-top: 3px;
  border-bottom: 1px solid #000;
}

.toc .tight td {
  padding-top: 2px;
}

.toc .last td {
  border-bottom: 0;
}

.toc .pg {
  width: 70px;
  padding-right: 8px;
  text-align: right;
}

.toc .chapter-pg {
  padding-right: 10px;
  font-weight: bold;
  font-size: 18px;
  line-height: 22px;
}

.r41 td { height: 41px; }
.r42 td { height: 42px; }
.r47 td { height: 47px; }
.r125 td { height: 125px; }

.lv3 { padding-left: 103px; }
.lv4 { padding-left: 111px; }
.lv4 b { display: inline-block; width: 32px; font-weight: normal; }

.toc .chapter {
  padding-left: 7px;
  font-weight: bold;
  font-size: 18.67px;
  letter-spacing: 0.1px;
  line-height: 22px;
  white-space: nowrap;
}

.toc .blank {
  padding: 84px 0 0 7px;
}

.cursor {
  display: block;
  width: 1px;
  height: 19px;
  background: #000;
}

/* status bar */

.status {
  height: 22px;
  flex-shrink: 0;
  display: flex;
  align-items: center;
  font-size: 11px;
  letter-spacing: -0.1px;
  color: #444;
  background: #f3f3f3;
  border-top: 1px solid #c6c6c6;
}

.st {
  margin-bottom: 2px;
}

.st-page { margin-left: 8px; }
.st-words { margin-left: 26px; }
.st-words-b { margin-left: 20px; }

.st-proof {
  width: 16px;
  height: 14px;
  margin: 0 17px 0 18px;
}

.views {
  display: flex;
  align-items: center;
  height: 21px;
  margin-left: auto;
}

.view-btn {
  width: 39px;
  height: 21px;
  display: flex;
  align-items: center;
  justify-content: center;
}

.view-btn:first-child {
  padding-right: 4px;
}

.view-btn.on {
  background: #c6c6c6;
}

.view-btn svg {
  width: 14px;
  height: 14px;
}

.view-btn:nth-child(3) {
  margin-right: 7px;
}

.zoom-minus {
  width: 8px;
  height: 1px;
  margin-right: 5px;
  background: #444;
}

.slider {
  display: flex;
  justify-content: center;
  align-items: center;
  width: 100px;
  height: 1px;
  background: #444;
}

.slider span {
  width: 5px;
  height: 11px;
  background: #555;
}

.zoom-plus {
  width: 17px;
  margin-right: 10px;
  text-align: center;
  font-size: 14px;
  line-height: 14px;
}

.zoom-val {
  width: 46px;
  margin-bottom: 2px;
  letter-spacing: -0.3px;
  white-space: nowrap;
}

/* taskbar */

.taskbar {
  position: relative;
  z-index: 2;
  height: 48px;
  flex-shrink: 0;
  display: flex;
  align-items: center;
  color: #fff;
  background: linear-gradient(90deg, #1b212b 0, #1b212b 16%, #111e4f 27%, #0e1a56 55%, #101b4b 72%, #1b202a 79%);
}

.weather {
  display: flex;
  align-items: center;
  width: 286px;
  padding-left: 21px;
}

.sun {
  width: 20px;
  height: 20px;
  margin-right: 10px;
  border-radius: 50%;
  background: linear-gradient(135deg, #f5b324, #ea6a12);
}

.weather-text {
  font-size: 11.5px;
  line-height: 16px;
}

.dim {
  color: #c4c6ca;
}

.task {
  position: relative;
  width: 44px;
  height: 48px;
  flex-shrink: 0;
  display: flex;
  align-items: center;
  justify-content: center;
}

.task > svg {
  width: 24px;
  height: 24px;
}

.search {
  display: flex;
  align-items: center;
  width: 220px;
  height: 31px;
  margin: 0 2px;
  padding-left: 11px;
  overflow: hidden;
  border-radius: 16px;
  background: #2f3a72;
  font-size: 13px;
  color: #dfe2ec;
}

.search-icon {
  width: 15px;
  height: 15px;
  margin-right: 11px;
}

.search-art {
  width: 55px;
  height: 31px;
  margin-left: auto;
}

.badge {
  position: absolute;
  top: 5px;
  right: 2px;
  width: 16px;
  height: 16px;
  border-radius: 50%;
  background: #49aee0;
  color: #111;
  font-size: 10.5px;
  font-weight: bold;
  line-height: 16px;
  text-align: center;
}

.dot {
  position: absolute;
  top: 5px;
  right: 3px;
  width: 16px;
  height: 16px;
  border-radius: 50%;
  background: #fbc312;
}

.hp-text {
  font: italic 8px "Noto Sans", sans-serif;
  fill: #fff;
  text-anchor: middle;
}

.help-mark {
  font: bold 17px "Liberation Sans", sans-serif;
  fill: #fff;
  text-anchor: middle;
}

.task-word {
  background: rgba(255, 255, 255, 0.07);
  border-radius: 5px;
  height: 46px;
}

.word-icon {
  width: 24px;
  height: 24px;
  display: flex;
  align-items: center;
  background: linear-gradient(#2fa4e9 0 25%, #1b7fd1 25% 50%, #1758ab 50% 75%, #103f91 75%);
  border-radius: 2px;
}

.word-icon b {
  width: 14px;
  height: 14px;
  margin-left: -3px;
  background: #1958a8;
  font: bold 10px/14px "Liberation Sans", sans-serif;
  text-align: center;
  color: #fff;
}

.running {
  position: absolute;
  bottom: 1px;
  left: 15px;
  width: 14px;
  height: 3px;
  border-radius: 2px;
  background: #4fc3f7;
}

.tray-up {
  width: 12px;
  height: 8px;
  margin-left: 24px;
}

.lang {
  width: 30px;
  margin-left: 17px;
  font-size: 11.5px;
  line-height: 16px;
  text-align: center;
}

.tray-icon {
  width: 18px;
  height: 14px;
  margin-left: 6px;
}

.wifi {
  margin-left: 14px;
}

.clock {
  width: 70px;
  margin-left: 8px;
  font-size: 12px;
  letter-spacing: -0.1px;
  line-height: 16px;
  text-align: right;
  white-space: nowrap;
}

.bell {
  width: 16px;
  height: 16px;
  margin-left: 7px;
}

.bell-z {
  font: bold 7px "Liberation Sans", sans-serif;
  fill: #1b202a;
}

.bell-z2 {
  font: bold 6px "Liberation Sans", sans-serif;
  fill: #fff;
}
```
